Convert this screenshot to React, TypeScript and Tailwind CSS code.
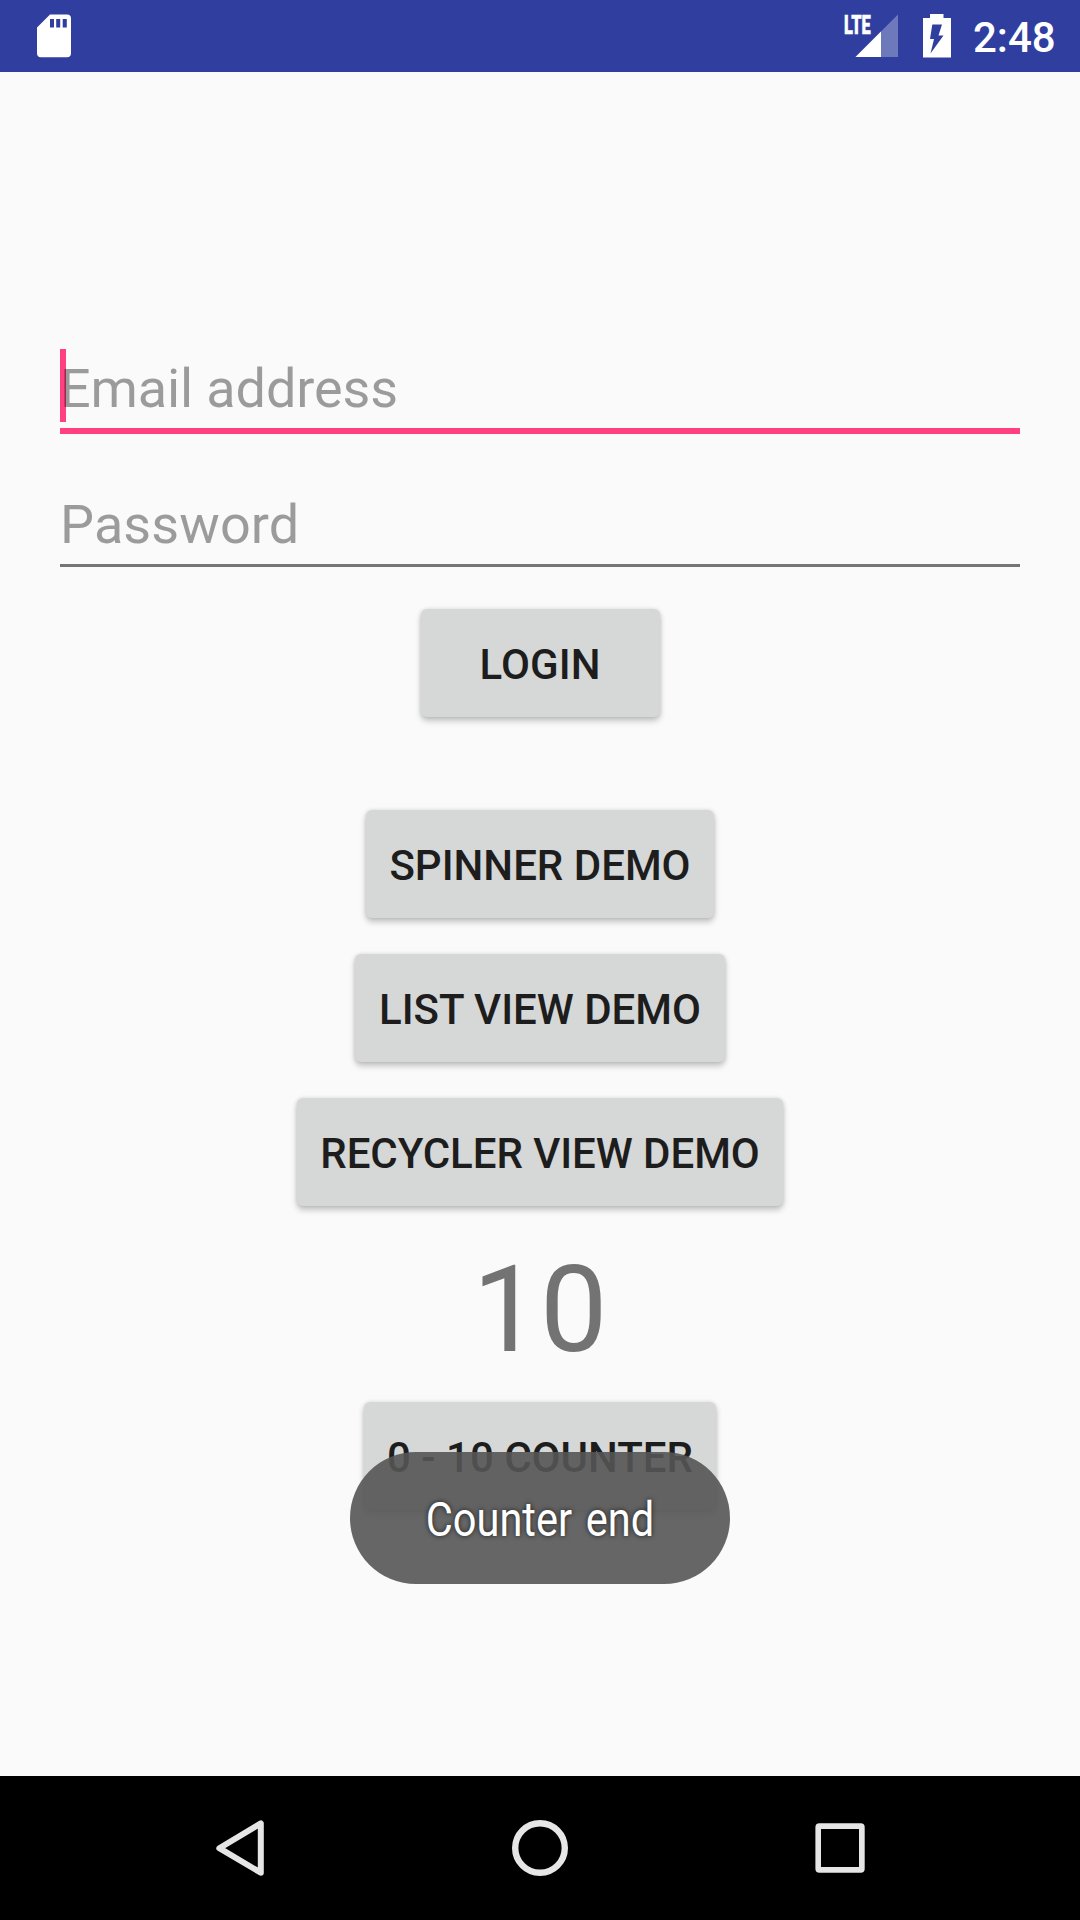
import React from "react";

function StatusBar() {
  return (
    <header className="flex h-[72px] items-start bg-[#303f9f] text-white">
      <svg className="ml-[37px] mt-[14px] h-[44px] w-[34px]" viewBox="0 0 34 44" fill="none">
        <path
          fillRule="evenodd"
          fill="currentColor"
          d="M13 .5H30Q34 .5 34 4.500V39.300Q34 43.300 30 43.300H4Q0 43.300 0 39.300V13.500ZM13 5V13.500H17V5ZM19.200 5V13.500H23.200V5ZM25.700 5V13.500H29.800V5Z"
        />
      </svg>
      <div className="relative ml-auto h-[72px] w-[54px]">
        <svg className="absolute left-0 top-0 h-[72px] w-[54px]" viewBox="0 0 54 72">
          <path d="M11.500 57 54 14.500V57Z" fill="white" fillOpacity=".3" />
          <path d="M11.500 57 37 31.500V57Z" fill="white" />
        </svg>
        <span className="absolute left-[0px] top-[13px] origin-left scale-x-[0.63] text-[26px] font-black leading-[24px] [-webkit-text-stroke:0.5px_white]">
          LTE
        </span>
      </div>
      <svg className="ml-[25px] mt-[14px] h-[44px] w-[28px]" viewBox="0 0 28 44">
        <path
          fillRule="evenodd"
          fill="white"
          d="M7 0H20.500V4H28V43.500H0V4H7ZM9.300 10.500H19L15.500 21.500H20.500L7.500 39.500L11 25H7Z"
        />
      </svg>
      <span className="ml-[22px] mr-[24px] mt-[12px] w-[83px] whitespace-nowrap text-[42px] font-medium leading-[52px]">
        2:48
      </span>
    </header>
  );
}

function DemoButton({ label, className }: { label: string; className: string }) {
  return (
    <button
      className={
        "flex h-[108px] items-center justify-center whitespace-nowrap rounded-[6px] bg-[#d6d7d7] pt-[3px] text-[42px] font-medium leading-[50px] text-[#1d1d1d] shadow-[0_4px_6px_rgba(0,0,0,0.22),0_0_4px_rgba(0,0,0,0.12)] " +
        className
      }
    >
      {label}
    </button>
  );
}

function NavBar() {
  return (
    <nav className="flex h-[144px] items-center justify-center gap-[240px] bg-black text-[#e6e6e6]">
      <svg className="h-[60px] w-[60px]" viewBox="0 0 60 60" fill="none" stroke="currentColor" strokeWidth="6" strokeLinejoin="round">
        <path d="M50.800 5.300V54.700L9.300 30.200Z" />
      </svg>
      <svg className="h-[60px] w-[60px]" viewBox="0 0 60 60" fill="none" stroke="currentColor" strokeWidth="6.400">
        <circle cx="30" cy="30" r="24.800" />
      </svg>
      <svg className="h-[60px] w-[60px]" viewBox="0 0 60 60" fill="currentColor">
        <path
          fillRule="evenodd"
          d="M9.400 5.200H50.700Q54.700 5.200 54.700 9.200V50.700Q54.700 54.700 50.700 54.700H9.400Q5.400 54.700 5.400 50.700V9.200Q5.400 5.200 9.400 5.200ZM11 11V49H49V11Z"
        />
      </svg>
    </nav>
  );
}

export default function App() {
  return (
    <div className="flex h-[1920px] w-[1080px] flex-col overflow-hidden bg-[#fafafa] font-['Roboto',sans-serif]">
      <StatusBar />
      <main className="relative flex flex-1 flex-col items-center px-[60px] pt-[277px]">
        <div className="relative h-[85px] w-full border-b-[6px] border-[#ff4081] pt-[3px]">
          <div className="absolute left-0 top-0 h-[73px] w-[6px] bg-[#ff4081]" />
          <span className="relative block whitespace-nowrap text-[54px] leading-[73px] tracking-[-0.12px] text-black/[0.38]">
            Email address
          </span>
        </div>
        <div className="mt-[54px] h-[79px] w-full border-b-[3px] border-[#757575]">
          <span className="block whitespace-nowrap text-[54px] leading-[73px] tracking-[0.1px] text-black/[0.38]">Password</span>
        </div>
        <DemoButton label="LOGIN" className="mt-[42px] w-[239px] tracking-[0.1px]" />
        <DemoButton label="SPINNER DEMO" className="mt-[93px] w-[348px]" />
        <DemoButton label="LIST VIEW DEMO" className="mt-[36px] w-[370px]" />
        <DemoButton label="RECYCLER VIEW DEMO" className="mt-[36px] w-[486px] tracking-[-0.05px]" />
        <div className="mt-[34px] text-[120px] leading-[141px] text-[#737373]">10</div>
        <DemoButton label="0 - 10 COUNTER" className="mt-[21px] w-[352px]" />
        <div className="absolute left-[350px] top-[1380px] flex h-[132px] w-[380px] items-center justify-center rounded-full bg-[#555555]/90 pt-[4px]">
          <span className="scale-x-[0.865] whitespace-nowrap text-[48px] leading-[56px] text-white [text-shadow:0_0_6px_rgba(0,0,0,0.73)] [word-spacing:4px]">
            Counter end
          </span>
        </div>
      </main>
      <NavBar />
    </div>
  );
}
